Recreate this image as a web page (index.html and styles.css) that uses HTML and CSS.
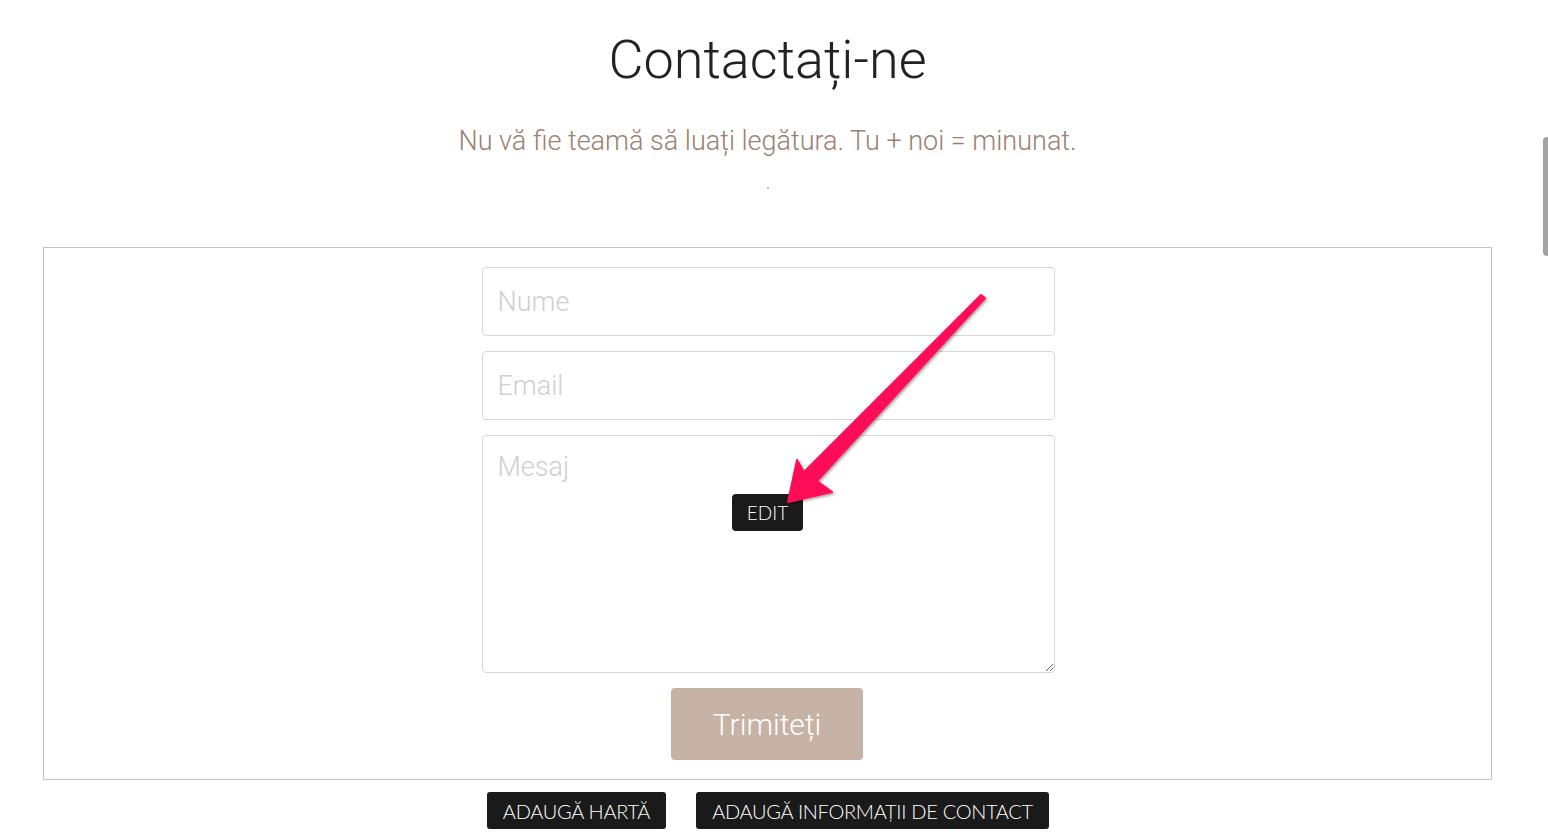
FILE: index.html
```html
<!DOCTYPE html>
<html lang="ro">
<head>
<meta charset="utf-8">
<title>Contactați-ne</title>
<link rel="stylesheet" href="styles.css">
</head>
<body>
<div class="page">
  <header class="intro">
    <h1 class="title">Contactați-ne</h1>
    <p class="subtitle">Nu vă fie teamă să luați legătura. Tu + noi = minunat.</p>
    <div class="dot"></div>
  </header>
  <section class="form-box">
    <form class="form">
      <input class="field" type="text" placeholder="Nume">
      <input class="field" type="text" placeholder="Email">
      <textarea class="field area" placeholder="Mesaj"></textarea>
      <button class="submit" type="button">Trimiteți</button>
    </form>
    <span class="edit-badge">EDIT</span>
  </section>
  <div class="actions">
    <button class="dark-btn map" type="button">ADAUGĂ HARTĂ</button>
    <button class="dark-btn info" type="button">ADAUGĂ INFORMAȚII DE CONTACT</button>
  </div>
</div>
<svg class="arrow" width="1548" height="833" viewBox="0 0 1548 833" aria-hidden="true">
  <defs>
    <filter id="sh" x="-20%" y="-20%" width="140%" height="140%">
      <feDropShadow dx="1.5" dy="1.5" stdDeviation="1.2" flood-color="#000" flood-opacity="0.35"/>
    </filter>
  </defs>
  <polygon filter="url(#sh)" fill="#ff1058" stroke="#ff1058" stroke-width="2" stroke-linejoin="round"
    points="981,295 985,298 817,481 832,492 788,502 797,460 804,472"/>
</svg>
<div class="scroll-thumb"></div>
</body>
</html>
```
FILE: styles.css
```css
html, body {
  margin: 0;
  padding: 0;
  background: #ffffff;
  overflow: hidden;
}
body {
  font-family: Roboto, "Liberation Sans", sans-serif;
  width: 1548px;
  height: 833px;
}
.page {
  width: 1449px;
  margin-left: 43px;
  display: flex;
  flex-direction: column;
  align-items: center;
}
.intro {
  display: flex;
  flex-direction: column;
  align-items: center;
  width: 100%;
}
.title {
  margin: 26px 0 0;
  font-weight: 300;
  font-size: 54px;
  line-height: 67px;
  color: #222222;
}
.subtitle {
  margin: 33px 0 0;
  font-weight: 300;
  font-size: 27px;
  line-height: 30px;
  color: #9b8072;
}
.dot {
  width: 2px;
  height: 2px;
  margin-top: 31px;
  background: #b9a397;
  border-radius: 1px;
}
.form-box {
  position: relative;
  box-sizing: border-box;
  width: 1449px;
  margin-top: 58px;
  border: 1px solid #c4c4c4;
  padding: 19px 0 19px;
  display: flex;
  justify-content: center;
}
.form {
  width: 573px;
  margin-left: 1px;
  display: flex;
  flex-direction: column;
  align-items: center;
  gap: 15px;
}
.field {
  box-sizing: border-box;
  width: 573px;
  height: 69px;
  border: 1px solid #d7d7d7;
  border-radius: 4px;
  padding: 0 15px;
  font-family: Roboto, "Liberation Sans", sans-serif;
  font-weight: 300;
  font-size: 27px;
  color: #555;
  background: #fff;
  outline: none;
  margin: 0;
}
.field::placeholder {
  color: #cfcfcf;
}
.area {
  height: 238px;
  padding-top: 15px;
  resize: vertical;
  display: block;
}
.submit {
  width: 192px;
  height: 72px;
  margin-right: 2px;
  border: none;
  border-radius: 4px;
  background: #c7b3a6;
  color: #ffffff;
  font-family: Roboto, "Liberation Sans", sans-serif;
  font-weight: 300;
  font-size: 30px;
  padding: 0;
  cursor: pointer;
}
.edit-badge {
  position: absolute;
  left: 688px;
  top: 246px;
  width: 71px;
  height: 37px;
  border-radius: 4px;
  background: #1a1a1a;
  color: #ffffff;
  font-family: Lato, "Liberation Sans", sans-serif;
  font-weight: 300;
  font-size: 19px;
  display: flex;
  align-items: center;
  justify-content: center;
}
.actions {
  display: flex;
  gap: 30px;
  margin-top: 12px;
  margin-left: 1px;
}
.dark-btn {
  height: 37px;
  border: none;
  border-radius: 3px;
  background: #1a1a1a;
  color: #ffffff;
  font-family: Lato, "Liberation Sans", sans-serif;
  font-weight: 300;
  font-size: 20px;
  padding: 0;
  letter-spacing: -0.3px;
  display: flex;
  align-items: center;
  justify-content: center;
}
.map {
  width: 179px;
}
.info {
  width: 353px;
}
.arrow {
  position: absolute;
  left: 0;
  top: 0;
  pointer-events: none;
}
.scroll-thumb {
  position: absolute;
  left: 1543px;
  top: 137px;
  width: 8px;
  height: 119px;
  border-radius: 4px;
  background: #a3a3a3;
}
```
